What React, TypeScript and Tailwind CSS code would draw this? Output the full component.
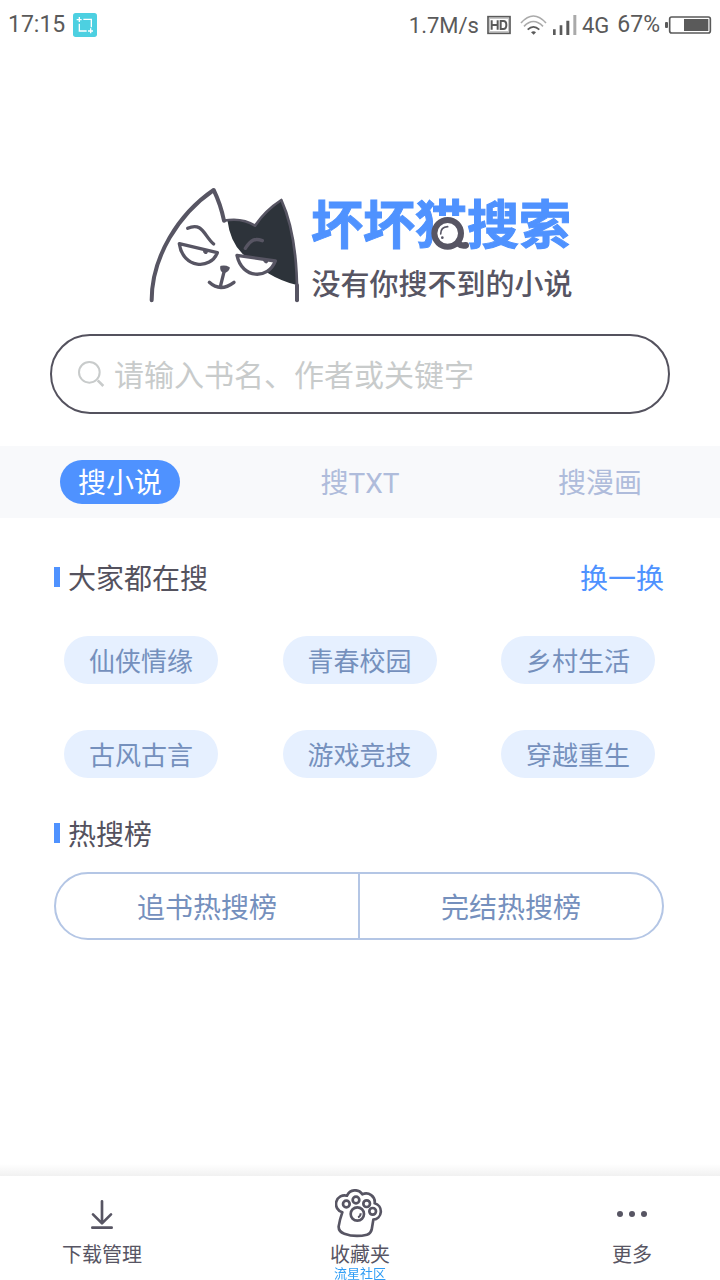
import type { ReactNode } from "react"

const tabs = ["搜小说", "搜TXT", "搜漫画"]
const keywords = ["仙侠情缘", "青春校园", "乡村生活", "古风古言", "游戏竞技", "穿越重生"]
const ranks = ["追书热搜榜", "完结热搜榜"]

const StatusBar = () => (
  <div className="flex h-[50px] items-center justify-between px-2 font-[Roboto,sans-serif] text-[23px] text-[#5a5a5a]">
    <div className="flex items-center gap-2">
      <span>17:15</span>
      <svg width="24" height="24" viewBox="0 0 72 72" fill="none" stroke="#fff" strokeWidth="4">
        <rect width="72" height="72" rx="8" fill="#4dd0e1" stroke="none" />
        <path d="M11 20h15M19 12v15M31 19h24v24M19 32v22h22M45 54h15M53 46v15" />
      </svg>
    </div>
    <div className="flex items-center">
      <span className="mr-2 text-[22px]">1.7M/s</span>
      <svg className="mr-[9px]" width="24" height="20" viewBox="0 0 72 60" fill="none" stroke="#5a5a5a">
        <rect x="3" y="5" width="66" height="50" strokeWidth="5" fill="#fff" />
        <rect x="8" y="10" width="56" height="40" strokeWidth="2" stroke="#aaa" />
        <path d="M14 16v28M32 16v28M14 30h18M41 18v24h8q9 0 9-12t-9-12z" strokeWidth="6" />
      </svg>
      <svg className="mr-[5px]" width="27" height="20" viewBox="0 0 81 60" fill="none" strokeWidth="5">
        <path d="M3 24Q40-18 78 24M12 34Q40 5 69 34" stroke="#aaa" />
        <path d="M23 44Q40 27 58 44" stroke="#5a5a5a" />
        <path d="M33 52q8-7 15 0l-7 7z" fill="#5a5a5a" />
      </svg>
      <svg className="mr-[5px]" width="25" height="20" viewBox="0 0 75 60" fill="#5a5a5a">
        <path d="M3 43h8v17H3zM23 31h8v29h-8zM43 17h9v43h-9z" />
        <path d="M64 0h9v60h-9z" fill="#aaa" />
      </svg>
      <span className="mr-2 text-[22px]">4G</span>
      <span className="mr-[5px]">67%</span>
      <svg width="47" height="18" viewBox="0 0 141 54">
        <rect x="0" y="18" width="9" height="18" rx="3" fill="#5a5a5a" />
        <rect x="14" y="3" width="122" height="48" rx="6" fill="#fff" stroke="#5a5a5a" strokeWidth="5" />
        <path d="M57 9h73v36H57z" fill="#5a5a5a" />
      </svg>
    </div>
  </div>
)

const Cat = () => (
  <svg width="170" height="130" viewBox="0 0 510 390" fill="none" stroke="#575563" strokeWidth="12" strokeLinecap="round" strokeLinejoin="round">
    <path d="M262 119Q306 114 345 137Q376 91 424 60Q474 170 471 315Q425 304 387 281L308 222Q270 185 262 119Z" fill="#2d333a" stroke="none" />
    <path d="M35 361C35 230 116 102 221 30Q242 73 252 122" />
    <path d="M252 122Q306 112 345 137Q376 91 424 60Q474 170 471 361" strokeWidth="8" />
    <path d="M471 316V361" />
    <path d="M143 145C188 124 193 170 221 192" strokeWidth="10" />
    <path d="M316 205C333 178 346 174 367 182" strokeWidth="10" />
    <path d="M118 191L232 218C213 270 128 266 118 191Z" fill="#fff" strokeWidth="10" />
    <path d="M291 226L406 243C385 299 306 298 291 226Z" fill="#fff" strokeWidth="10" />
    <path d="M191 211l11 3q-1 7-6 6t-5-9zM371 240l12 2q-1 7-6 6t-6-8z" fill="#575563" strokeWidth="4" />
    <path d="M244 261Q255 258 266 264Q263 273 253 276Q243 273 244 261Z" fill="#575563" strokeWidth="7" />
    <path d="M253 272L241 320M208 307Q241 338 282 307" strokeWidth="10" />
  </svg>
)

const Logo = () => (
  <div className="mt-[130px] flex justify-center pr-2">
    <Cat />
    <div className="flex w-[262px] flex-col items-center pt-3">
      <h1 className="relative text-[52px] leading-[60px] font-bold whitespace-nowrap text-[#4f92ff] [-webkit-text-stroke:1px_#4f92ff]">
        坏坏猫搜索
        <svg className="absolute top-6 left-[120px]" width="40" height="36" viewBox="0 0 120 108" fill="none" stroke="#575563">
          <path d="M6-3h100v111H6z" fill="#fff" stroke="none" />
          <circle cx="50" cy="52" r="40" fill="#fff" strokeWidth="18" />
          <path d="M84 84q6 6 20 4" strokeWidth="20" strokeLinecap="round" />
          <path d="M29 54Q29 33 50 32" strokeWidth="5" strokeLinecap="round" />
          <circle cx="34" cy="65" r="4" fill="#575563" stroke="none" />
        </svg>
      </h1>
      <p className="mt-[10px] pl-[2px] text-[29px] leading-10 font-medium whitespace-nowrap text-[#575563]">没有你搜不到的小说</p>
    </div>
  </div>
)

const SectionTitle = ({ children }: { children: ReactNode }) => (
  <h2 className="flex items-center gap-2 text-[28px] leading-10 text-[#54525e]">
    <span className="h-5 w-[6px] bg-[#4f92ff]" />
    {children}
  </h2>
)

const NavItem = ({ label, className = "", children }: { label: string; className?: string; children: ReactNode }) => (
  <button className={`flex flex-col items-center pt-3 text-xl leading-6 text-[#575563] ${className}`}>
    <span className="mb-[2px] flex h-[52px] items-center">{children}</span>
    {label}
  </button>
)

const BottomNav = () => (
  <nav className="sticky bottom-0 mt-auto">
    <div className="h-3 bg-linear-to-b from-white to-[#f1f1f1]" />
    <div className="relative grid h-[104px] grid-cols-[204px_1fr_204px] bg-white">
      <NavItem label="下载管理">
        <svg width="24" height="30" viewBox="0 0 72 90" fill="none" stroke="#575563" strokeWidth="8" strokeLinecap="round" strokeLinejoin="round">
          <path d="M36 7v66M9 46l27 27 27-27M7 86h58" />
        </svg>
      </NavItem>
      <NavItem label="收藏夹">
        <svg width="50" height="50" viewBox="0 0 150 150" fill="none" stroke="#575563" strokeWidth="8" strokeLinejoin="round">
          <path d="M22 70A25 25 0 0 1 36 20A26 26 0 0 1 82 16A26 26 0 0 1 119 43A25 25 0 0 1 115 92L110 122Q107 134 96 137Q60 146 28 134Q10 128 11 112Q14 92 22 70Z" />
          <circle cx="34" cy="45" r="10" />
          <circle cx="63" cy="33" r="10" />
          <circle cx="95" cy="44" r="10" />
          <circle cx="113" cy="67" r="10" />
          <circle cx="67" cy="75" r="20" />
          <path d="M69 85Q77 82 77 73" strokeWidth="6" />
        </svg>
      </NavItem>
      <NavItem label="更多" className="pl-7">
        <svg width="32" height="8" viewBox="0 0 96 24" fill="#575563">
          <circle cx="12" cy="12" r="9" />
          <circle cx="48" cy="12" r="9" />
          <circle cx="84" cy="12" r="9" />
        </svg>
      </NavItem>
      <span className="absolute inset-x-0 bottom-0 text-center text-[13px] leading-[14px] text-[#2f9df5]">流星社区</span>
    </div>
  </nav>
)

const App = () => {
  return (
    <div className="flex min-h-screen flex-col bg-white font-['Noto_Sans_CJK_SC',sans-serif]">
      <StatusBar />
      <Logo />

      <label className="mx-[50px] mt-6 flex h-20 items-center gap-[9px] rounded-full border-2 border-[#54525e] px-[25px]">
        <svg className="shrink-0" width="28" height="28" viewBox="0 0 84 84" fill="none" stroke="#c8cbcb" strokeWidth="6">
          <circle cx="37" cy="37" r="31" />
          <path d="M62 61l17 17" strokeWidth="8" />
        </svg>
        <input
          type="text"
          aria-label="搜索"
          placeholder="请输入书名、作者或关键字"
          className="h-12 min-w-0 flex-1 pb-[2px] text-[30px] outline-none placeholder:text-[#c8cbcb]"
        />
      </label>

      <div className="mt-8 flex h-[72px] items-center justify-between bg-[#f8f9fb] px-[60px] font-[Roboto,'Noto_Sans_CJK_SC',sans-serif]">
        {tabs.map((tab, i) => (
          <button
            key={tab}
            className={`h-11 w-[120px] rounded-full pt-1 text-[28px] leading-10 ${i === 0 ? "bg-[#4f92ff] text-white" : "text-[#afbcdb]"}`}
          >
            {tab}
          </button>
        ))}
      </div>

      <section className="mt-[39px] px-[54px]">
        <div className="flex items-center justify-between pr-[2px]">
          <SectionTitle>大家都在搜</SectionTitle>
          <button className="text-[28px] leading-10 text-[#4f92ff]">换一换</button>
        </div>
        <div className="mt-[39px] grid grid-cols-[154px_154px_154px] justify-between gap-y-[46px] pr-[11px] pl-[10px]">
          {keywords.map((word) => (
            <button key={word} className="h-12 rounded-full bg-[#e6f0ff] text-[26px] leading-[48px] text-[#7590bd]">
              {word}
            </button>
          ))}
        </div>
      </section>

      <section className="mt-[35px] mb-10 pr-14 pl-[54px]">
        <SectionTitle>热搜榜</SectionTitle>
        <div className="mt-[19px] flex h-[68px] divide-x-2 divide-[#b4c6e5] rounded-full border-2 border-[#b4c6e5]">
          {ranks.map((rank) => (
            <button key={rank} className="flex-1 text-[28px] text-[#7590bd]">
              {rank}
            </button>
          ))}
        </div>
      </section>

      <BottomNav />
    </div>
  )
}

export default App
